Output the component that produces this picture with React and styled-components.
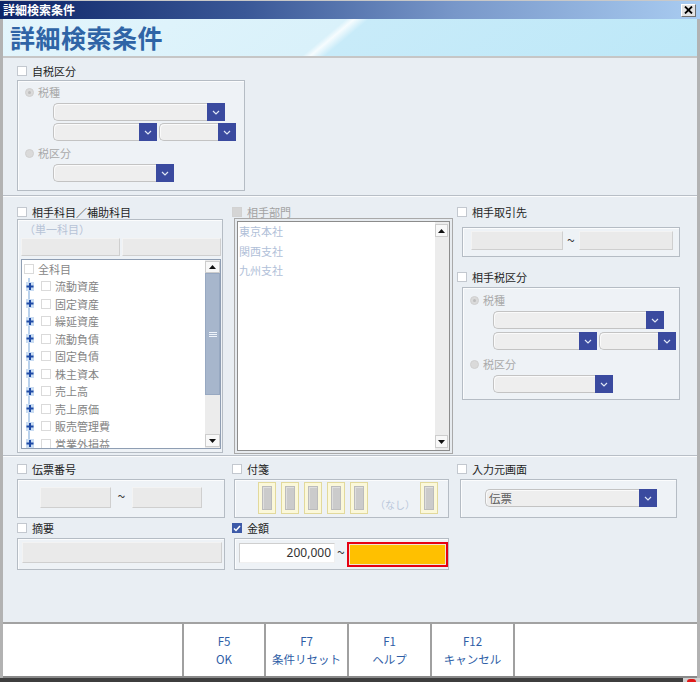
import React from "react";
import styled, { createGlobalStyle } from "styled-components";

const Global = createGlobalStyle`
  html, body { margin: 0; padding: 0; background: #fff; }
  body { font-family: "Noto Sans CJK JP", "Noto Sans", sans-serif; font-size: 11px; }
  #root { width: 700px; height: 682px; overflow: hidden; }
`;

const Root = styled.div`
  width: 700px;
  height: 682px;
  display: flex;
  flex-direction: column;
  overflow: hidden;
  background: #e9eef3;
`;

const TitleBar = styled.div`
  height: 19px;
  flex: none;
  box-sizing: border-box;
  display: flex;
  align-items: center;
  justify-content: space-between;
  padding: 0 4px 0 3px;
  background: linear-gradient(to right, #0d2467 0%, #3a5897 35%, #7897c9 65%, #a9ccf1 100%);
  border-top: 1px solid #c8c8c8;
  color: #fff;
  font-weight: bold;
  font-size: 12px;
  line-height: 18px;
`;

const CloseBtn = styled.div`
  width: 15px;
  height: 13px;
  box-sizing: border-box;
  background: #e4e4e4;
  border: 1px solid;
  border-color: #ffffff #707070 #707070 #ffffff;
  display: flex;
  align-items: center;
  justify-content: center;
`;

const Frame = styled.div`
  flex: 1;
  min-height: 0;
  display: flex;
  flex-direction: column;
  border-left: 3px solid #b2b2b2;
  border-right: 3px solid #b2b2b2;
`;

const Header = styled.div`
  height: 39px;
  flex: none;
  box-sizing: border-box;
  border-bottom: 2px solid #c6c6c6;
  padding-left: 7px;
  background: linear-gradient(140deg, #e3f5fc 0%, #d9f1fa 46.5%, #f6fcfe 47.6%, #c8ebf9 49.6%, #bde8f8 100%);
  color: #2f64a6;
  font-size: 25px;
  font-weight: bold;
  line-height: 37px;
  letter-spacing: 0.5px;
`;

const Body = styled.div`
  flex: 1;
  min-height: 0;
  display: flex;
  flex-direction: column;
`;

const Section = styled.div`
  height: ${(p) => (p.$h ? `${p.$h}px` : "auto")};
  flex: ${(p) => (p.$h ? "none" : "1")};
  box-sizing: border-box;
  padding: ${(p) => p.$pt}px 0 0 14px;
`;

const Divider = styled.div`
  height: 2px;
  flex: none;
  box-sizing: border-box;
  border-top: 1px solid #b8bec6;
  border-bottom: 1px solid #fbfcfd;
`;

const Columns = styled.div`
  display: grid;
  grid-template-columns: 215px 224px 224px;
  align-items: start;
  row-gap: ${(p) => p.$rowGap || 0}px;
`;

const Col = styled.div`
  display: flex;
  flex-direction: column;
`;

const CheckRow = styled.div`
  height: 14px;
  display: flex;
  align-items: center;
  gap: 5px;
  margin-left: ${(p) => p.$ml || 0}px;
  margin-top: ${(p) => p.$mt || 0}px;
`;

const Box = styled.span`
  width: 10px;
  height: 10px;
  flex: none;
  box-sizing: border-box;
  border: 1px solid ${(p) => (p.$checked ? "#3d5aa8" : p.$disabled ? "#d2d2d2" : p.$faint ? "#dadada" : "#c3c8cf")};
  background: ${(p) => (p.$checked ? "#3d5aa8" : p.$disabled ? "#d5d5d5" : "#ffffff")};
  display: flex;
  align-items: center;
  justify-content: center;
`;

const Label = styled.span`
  font-size: 11px;
  line-height: 14px;
  color: ${(p) => (p.$disabled ? "#a2a2a2" : "#1e1e1e")};
  white-space: nowrap;
`;

const Group = styled.div`
  box-sizing: border-box;
  width: ${(p) => p.$w}px;
  height: ${(p) => (p.$h ? `${p.$h}px` : "auto")};
  margin-left: ${(p) => p.$ml || 0}px;
  margin-top: ${(p) => p.$mt || 0}px;
  border: 1px solid #b5bcc4;
  background: #eef2f6;
  box-shadow: inset 1px 1px 0 #fbfcfd;
`;

/* ---------- tax group ---------- */
const TaxBox = styled(Group)`
  display: flex;
  flex-direction: column;
  padding: ${(p) => (p.$loose ? "7px 0 6px 7px" : "6px 0 8px 7px")};
`;

const RadioRow = styled.div`
  height: 10px;
  display: flex;
  align-items: center;
  gap: 4px;
  margin-top: ${(p) => p.$mt || 0}px;
`;

const Radio = styled.span`
  width: 9px;
  height: 9px;
  flex: none;
  box-sizing: border-box;
  border-radius: 50%;
  background: #dadada;
  border: 1px solid #d0d0d0;
  display: flex;
  align-items: center;
  justify-content: center;
  &::after {
    content: "";
    width: 3px;
    height: 3px;
    border-radius: 50%;
    background: ${(p) => (p.$on ? "#bdbdbd" : "transparent")};
  }
`;

const RadioLabel = styled.span`
  font-size: 11px;
  line-height: 12px;
  color: #a9a9a9;
`;

const SelectRow = styled.div`
  display: flex;
  gap: 2px;
  margin-left: ${(p) => p.$indent}px;
  margin-top: ${(p) => p.$mt}px;
`;

const SelectWrap = styled.div`
  display: flex;
  width: ${(p) => p.$w}px;
  height: 18px;
  flex: none;
  box-sizing: border-box;
  border: 1px solid #c3c3c3;
  border-right: none;
  border-radius: 5px 0 0 5px;
  background: #eeeeee;
  box-shadow: inset 1px 1px 0 #fafafa;
`;

const SelectValue = styled.div`
  flex: 1;
  padding-left: 3px;
  font-size: 11.5px;
  line-height: 16px;
  color: #606060;
`;

const SelectBtn = styled.div`
  width: 18px;
  flex: none;
  margin: -1px 0;
  background: #3a4a9f;
  display: flex;
  align-items: center;
  justify-content: center;
`;

const Chevron = () => (
  <svg width="8" height="5" viewBox="0 0 8 5">
    <polyline points="1,1 4,4 7,1" fill="none" stroke="#dfe6f5" strokeWidth="1.2" />
  </svg>
);

const Select = ({ w, value }) => (
  <SelectWrap $w={w}>
    <SelectValue>{value}</SelectValue>
    <SelectBtn>
      <Chevron />
    </SelectBtn>
  </SelectWrap>
);

const TaxGroup = ({ w, indent, mt, ml, loose, widths }) => (
  <TaxBox $w={w} $mt={mt} $ml={ml} $loose={loose}>
    <RadioRow>
      <Radio $on />
      <RadioLabel>税種</RadioLabel>
    </RadioRow>
    <SelectRow $indent={indent} $mt={6}>
      <Select w={widths[0]} />
    </SelectRow>
    <SelectRow $indent={indent} $mt={loose ? 3 : 2}>
      <Select w={widths[1]} />
      <Select w={widths[2]} />
    </SelectRow>
    <RadioRow $mt={loose ? 9 : 7}>
      <Radio />
      <RadioLabel>税区分</RadioLabel>
    </RadioRow>
    <SelectRow $indent={indent} $mt={6}>
      <Select w={widths[3]} />
    </SelectRow>
  </TaxBox>
);

/* ---------- inputs ---------- */
const GrayInput = styled.div`
  width: ${(p) => (p.$w ? `${p.$w}px` : "auto")};
  height: ${(p) => p.$h}px;
  flex: none;
  box-sizing: border-box;
  background: #eaeaea;
  border: 1px solid;
  border-color: #f3f3f3 #cfcfcf #cfcfcf #f3f3f3;
`;

const Tilde = styled.span`
  width: ${(p) => p.$w}px;
  flex: none;
  text-align: center;
  font-size: 14px;
  line-height: 18px;
  color: #3a3a3a;
`;

const RangeBox = styled(Group)`
  display: flex;
  align-items: flex-start;
  padding: ${(p) => p.$pad};
`;

/* ---------- account tree ---------- */
const AccountGroup = styled(Group)`
  display: flex;
  flex-direction: column;
  padding: 2px 1px 3px 3px;
`;

const Hint = styled.div`
  font-size: 11px;
  line-height: 14px;
  color: #b7c3d6;
  padding-left: 3px;
`;

const ButtonPair = styled.div`
  display: grid;
  grid-template-columns: 1fr 1fr;
  gap: 2px;
  margin-top: 2px;
`;

const TreeBox = styled.div`
  margin-top: 3px;
  height: 190px;
  box-sizing: border-box;
  border: 1px solid #8f9eb3;
  background: #fff;
  display: flex;
  overflow: hidden;
`;

const TreeList = styled.div`
  flex: 1;
  display: flex;
  flex-direction: column;
  overflow: hidden;
`;

const TreeRow = styled.div`
  height: 17.5px;
  flex: none;
  display: flex;
  align-items: center;
  padding-left: ${(p) => (p.$root ? 2 : 0)}px;
  gap: 4px;
`;

const Gutter = styled.div`
  width: 15px;
  height: 100%;
  flex: none;
  display: flex;
  align-items: center;
  padding-left: 4px;
  box-sizing: border-box;
  background: linear-gradient(to right, transparent 6px, #b9d1ec 6px, #b9d1ec 8px, transparent 8px);
`;

const TreeText = styled.span`
  font-size: 11px;
  line-height: 14px;
  color: #858585;
  white-space: nowrap;
`;

const PlusIcon = () => (
  <svg width="8" height="9" viewBox="0 0 8 9">
    <rect x="0" y="0" width="8" height="9" fill="#c9dcf2" />
    <path d="M4 1 V8 M0.5 4.5 H7.5" stroke="#1f4aa6" strokeWidth="2" />
  </svg>
);

/* ---------- scrollbars ---------- */
const VScroll = styled.div`
  width: ${(p) => p.$w}px;
  flex: none;
  box-sizing: border-box;
  display: flex;
  flex-direction: column;
  background: #ececec;
  padding: ${(p) => p.$pad};
`;

const ScrollBtn = styled.div`
  height: ${(p) => p.$h}px;
  flex: none;
  box-sizing: border-box;
  background: #f8f8f8;
  border: 1px solid #cdcdcd;
  display: flex;
  align-items: center;
  justify-content: center;
`;

const Thumb = styled.div`
  height: ${(p) => p.$h}px;
  flex: none;
  box-sizing: border-box;
  background: #a7b6cc;
  border: 1px solid #97a8c1;
  display: flex;
  align-items: center;
  justify-content: center;
`;

const Track = styled.div`
  flex: 1;
`;

const Arrow = ({ down }) => (
  <svg width="7" height="4" viewBox="0 0 7 4">
    <polygon points={down ? "0,0 7,0 3.5,4" : "0,4 7,4 3.5,0"} fill="#111" />
  </svg>
);

const Grip = () => (
  <svg width="8" height="5" viewBox="0 0 8 5">
    <path d="M0 0.5 H8 M0 2.5 H8 M0 4.5 H8" stroke="#eef3fa" strokeWidth="1" />
  </svg>
);

/* ---------- department list ---------- */
const ListOuter = styled.div`
  margin-left: 2px;
  margin-top: -1px;
  width: 219px;
  height: 236px;
  box-sizing: border-box;
  border: 1px solid #a9a9a9;
  padding: 2px;
  background: #e7ebef;
`;

const ListInner = styled.div`
  height: 100%;
  box-sizing: border-box;
  border: 1px solid #8c8c8c;
  background: #fff;
  display: flex;
`;

const ListItems = styled.div`
  flex: 1;
  padding-left: 1px;
  display: flex;
  flex-direction: column;
`;

const ListItem = styled.div`
  height: 19.5px;
  line-height: 19.5px;
  font-size: 11px;
  color: #b0c0d8;
`;

/* ---------- sticky tags ---------- */
const TagBox = styled(Group)`
  display: flex;
  align-items: flex-start;
  padding: 2px 0 0 23px;
  gap: 5px;
`;

const Tag = styled.div`
  width: 18px;
  height: 32px;
  flex: none;
  box-sizing: border-box;
  border: 1px solid #e2d99c;
  background: #fbf8da;
  padding: 3px;
`;

const TagInner = styled.div`
  height: 100%;
  box-sizing: border-box;
  background: #cbcbcb;
  border: 1px solid #bcbcbc;
  box-shadow: inset 1px 1px 0 #dedede;
`;

const None = styled.div`
  width: 42px;
  height: 32px;
  flex: none;
  display: flex;
  align-items: flex-end;
  justify-content: flex-end;
  font-size: 10px;
  line-height: 18px;
  color: #b8c6da;
`;

/* ---------- amount ---------- */
const AmountBox = styled(Group)`
  display: flex;
  align-items: flex-start;
  padding: 4px 0 0 4px;
`;

const AmountInput = styled.div`
  width: 96px;
  height: 20px;
  flex: none;
  box-sizing: border-box;
  background: #fff;
  border: 1px solid;
  border-color: #cfcfcf #f0f0f0 #f0f0f0 #cfcfcf;
  text-align: right;
  padding-right: 3px;
  font-family: "Noto Sans", sans-serif;
  font-size: 12px;
  line-height: 18px;
  color: #333;
`;

const Highlight = styled.div`
  width: 101px;
  height: 25px;
  flex: none;
  margin-top: -1px;
  box-sizing: border-box;
  border: 2px solid #e60012;
  background: #ffc000;
  box-shadow: inset 0 0 0 1px #efe6cf;
`;

const SourceBox = styled(Group)`
  padding: 9px 0 0 24px;
`;

/* ---------- footer ---------- */
const Footer = styled.div`
  height: 56px;
  flex: none;
  box-sizing: border-box;
  border-top: 2px solid #a2a2a2;
  border-bottom: 2px solid #8a8a8a;
  background: #fff;
  display: flex;
`;

const FooterSpacer = styled.div`
  width: 179px;
  flex: none;
`;

const FKey = styled.div`
  width: ${(p) => p.$w}px;
  flex: none;
  box-sizing: border-box;
  border-left: 2px solid #a0a0a0;
  border-right: ${(p) => (p.$last ? "2px solid #a0a0a0" : "none")};
  display: flex;
  flex-direction: column;
  align-items: center;
  justify-content: center;
  color: #2f5ea6;
  font-size: 11.5px;
  line-height: 18px;
`;

const StatusStrip = styled.div`
  height: 4px;
  flex: none;
  background: #3e3e3e;
  display: flex;
  justify-content: flex-end;
`;

const StripIcon = styled.div`
  width: 17px;
  background: #cfcfcf;
  display: flex;
  justify-content: center;
  align-items: flex-end;
  &::after {
    content: "";
    width: 9px;
    height: 3px;
    border-radius: 5px 5px 0 0;
    background: #e01818;
  }
`;

const CheckMark = () => (
  <svg width="8" height="7" viewBox="0 0 8 7">
    <polyline points="1,3.5 3,5.5 7,1" fill="none" stroke="#fff" strokeWidth="1.5" />
  </svg>
);

const CheckField = ({ label, checked, disabled, ml, mt }) => (
  <CheckRow $ml={ml} $mt={mt}>
    <Box $checked={checked} $disabled={disabled}>
      {checked && <CheckMark />}
    </Box>
    <Label $disabled={disabled}>{label}</Label>
  </CheckRow>
);

const accounts = [
  "流動資産",
  "固定資産",
  "繰延資産",
  "流動負債",
  "固定負債",
  "株主資本",
  "売上高",
  "売上原価",
  "販売管理費",
  "営業外損益",
];

export default function App() {
  return (
    <Root>
      <Global />
      <TitleBar>
        <span>詳細検索条件</span>
        <CloseBtn>
          <svg width="9" height="8" viewBox="0 0 9 8">
            <path d="M1 0.5 L8 7.5 M8 0.5 L1 7.5" stroke="#000" strokeWidth="1.8" />
          </svg>
        </CloseBtn>
      </TitleBar>
      <Frame>
        <Header>詳細検索条件</Header>
        <Body>
          <Section $h={137} $pt={6}>
            <CheckField label="自税区分" />
            <TaxGroup w={228} indent={28} mt={2} ml={0} widths={[172, 104, 77, 121]} />
          </Section>
          <Divider />
          <Section $h={258} $pt={8}>
            <Columns>
              <Col>
                <CheckField label="相手科目／補助科目" />
                <AccountGroup $w={206}>
                  <Hint>（単一科目）</Hint>
                  <ButtonPair>
                    <GrayInput $h={18} />
                    <GrayInput $h={18} />
                  </ButtonPair>
                  <TreeBox>
                    <TreeList>
                      <TreeRow $root>
                        <Box $faint />
                        <TreeText>全科目</TreeText>
                      </TreeRow>
                      {accounts.map((a) => (
                        <TreeRow key={a}>
                          <Gutter>
                            <PlusIcon />
                          </Gutter>
                          <Box $faint />
                          <TreeText>{a}</TreeText>
                        </TreeRow>
                      ))}
                    </TreeList>
                    <VScroll $w={15} $pad="1px 0 1px 0">
                      <ScrollBtn $h={12}>
                        <Arrow />
                      </ScrollBtn>
                      <Thumb $h={122}>
                        <Grip />
                      </Thumb>
                      <Track />
                      <ScrollBtn $h={13}>
                        <Arrow down />
                      </ScrollBtn>
                    </VScroll>
                  </TreeBox>
                </AccountGroup>
              </Col>
              <Col>
                <CheckField label="相手部門" disabled />
                <ListOuter>
                  <ListInner>
                    <ListItems>
                      <ListItem>東京本社</ListItem>
                      <ListItem>関西支社</ListItem>
                      <ListItem>九州支社</ListItem>
                    </ListItems>
                    <VScroll $w={14} $pad="2px 1px 2px 0">
                      <ScrollBtn $h={13}>
                        <Arrow />
                      </ScrollBtn>
                      <Track />
                      <ScrollBtn $h={13}>
                        <Arrow down />
                      </ScrollBtn>
                    </VScroll>
                  </ListInner>
                </ListOuter>
              </Col>
              <Col>
                <CheckField label="相手取引先" ml={1} />
                <RangeBox $w={218} $h={30} $ml={6} $mt={8} $pad="3px 0 0 8px">
                  <GrayInput $w={92} $h={19} />
                  <Tilde $w={16}>~</Tilde>
                  <GrayInput $w={94} $h={19} />
                </RangeBox>
                <CheckField label="相手税区分" ml={1} mt={13} />
                <TaxGroup w={218} indent={23} mt={3} ml={6} loose widths={[171, 104, 77, 120]} />
              </Col>
            </Columns>
          </Section>
          <Divider />
          <Section $pt={5}>
            <Columns $rowGap={3}>
              <Col>
                <CheckField label="伝票番号" />
                <RangeBox $w={208} $h={39} $mt={3} $pad="7px 0 0 22px">
                  <GrayInput $w={71} $h={21} />
                  <Tilde $w={21}>~</Tilde>
                  <GrayInput $w={70} $h={21} />
                </RangeBox>
              </Col>
              <Col>
                <CheckField label="付箋" />
                <TagBox $w={215} $h={39} $mt={3} $ml={2}>
                  {[0, 1, 2, 3, 4].map((i) => (
                    <Tag key={i}>
                      <TagInner />
                    </Tag>
                  ))}
                  <None>（なし）</None>
                  <Tag>
                    <TagInner />
                  </Tag>
                </TagBox>
              </Col>
              <Col>
                <CheckField label="入力元画面" ml={1} />
                <SourceBox $w={217} $h={39} $mt={3} $ml={4}>
                  <Select w={172} value="伝票" />
                </SourceBox>
              </Col>
              <Col>
                <CheckField label="摘要" />
                <RangeBox $w={208} $h={32} $mt={3} $pad="3px 0 0 4px">
                  <GrayInput $w={200} $h={21} />
                </RangeBox>
              </Col>
              <Col>
                <CheckField label="金額" checked />
                <AmountBox $w={215} $h={32} $mt={3} $ml={2}>
                  <AmountInput>200,000</AmountInput>
                  <Tilde $w={12}>~</Tilde>
                  <Highlight />
                </AmountBox>
              </Col>
            </Columns>
          </Section>
        </Body>
        <Footer>
          <FooterSpacer />
          <FKey $w={82}>
            <span>F5</span>
            <span>OK</span>
          </FKey>
          <FKey $w={83}>
            <span>F7</span>
            <span>条件リセット</span>
          </FKey>
          <FKey $w={83}>
            <span>F1</span>
            <span>ヘルプ</span>
          </FKey>
          <FKey $w={85} $last>
            <span>F12</span>
            <span>キャンセル</span>
          </FKey>
        </Footer>
      </Frame>
      <StatusStrip>
        <StripIcon />
      </StatusStrip>
    </Root>
  );
}
